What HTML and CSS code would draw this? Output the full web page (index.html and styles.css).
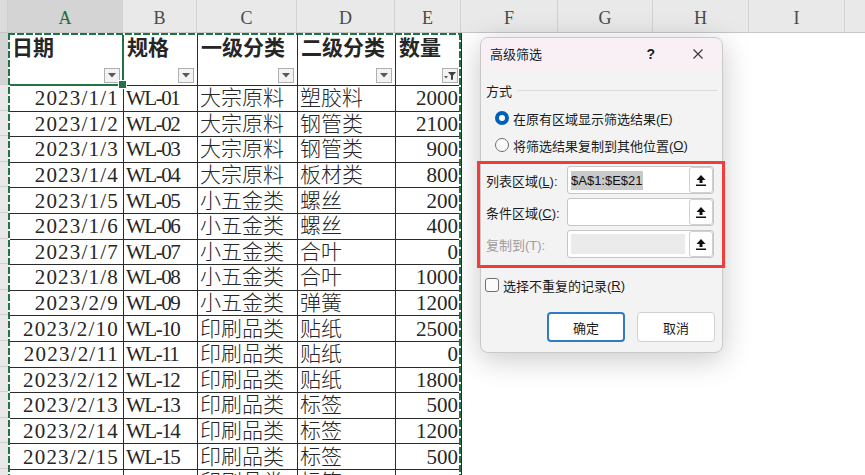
FILE: index.html
```html
<!DOCTYPE html>
<html lang="zh-CN">
<head>
    <meta charset="UTF-8">
    <title>高级筛选</title>
    <link rel="stylesheet" href="styles.css">
</head>
<body>

    <div class="col-heads">
        <div class="corner"></div>
        <div class="ch c-a sel">A</div>
        <div class="ch c-b">B</div>
        <div class="ch c-c">C</div>
        <div class="ch c-d">D</div>
        <div class="ch c-e">E</div>
        <div class="ch c-f">F</div>
        <div class="ch c-g">G</div>
        <div class="ch c-h">H</div>
        <div class="ch c-i">I</div>
        <div class="ch c-j"></div>
    </div>

    <div class="grid">
        <div class="row-heads">
            <div class="rh first"></div>
            <div class="rh"></div><div class="rh"></div><div class="rh"></div><div class="rh"></div>
            <div class="rh"></div><div class="rh"></div><div class="rh"></div><div class="rh"></div>
            <div class="rh"></div><div class="rh"></div><div class="rh"></div><div class="rh"></div>
            <div class="rh"></div><div class="rh"></div><div class="rh"></div><div class="rh"></div>
        </div>

        <div class="range">
            <table class="data">
                <colgroup>
                    <col class="c-a"><col class="c-b"><col class="c-c"><col class="c-d"><col class="c-e">
                </colgroup>
                <thead>
                    <tr class="head-row">
                        <th><div class="hd"><span>日期</span><span class="fbtn"><svg width="8" height="5" viewBox="0 0 8 5"><path d="M0 0h8L4 4.5z" fill="#595959"/></svg></span></div></th>
                        <th><div class="hd"><span>规格</span><span class="fbtn"><svg width="8" height="5" viewBox="0 0 8 5"><path d="M0 0h8L4 4.5z" fill="#595959"/></svg></span></div></th>
                        <th><div class="hd"><span>一级分类</span><span class="fbtn"><svg width="8" height="5" viewBox="0 0 8 5"><path d="M0 0h8L4 4.5z" fill="#595959"/></svg></span></div></th>
                        <th><div class="hd"><span>二级分类</span><span class="fbtn"><svg width="8" height="5" viewBox="0 0 8 5"><path d="M0 0h8L4 4.5z" fill="#595959"/></svg></span></div></th>
                        <th><div class="hd"><span>数量</span><span class="fbtn"><svg width="12" height="9" viewBox="0 0 12 9"><path d="M0 5h4L2 7.5z" fill="#595959"/><path d="M4 1h8L9 4.5V8.5L7 9V4.5z" fill="#404040"/></svg></span></div></th>
                    </tr>
                </thead>
                <tbody id="rows"></tbody>
            </table>
            <div class="cursor"><span class="handle"></span></div>
        </div>
    </div>

    <div class="dialog">
        <div class="dlg-title">
            <span class="dlg-name">高级筛选</span>
            <span class="dlg-help">?</span>
            <span class="dlg-close"><svg width="10" height="10" viewBox="0 0 10 10"><path d="M0.5 0.5L9.5 9.5M9.5 0.5L0.5 9.5" stroke="#333" stroke-width="1.1"/></svg></span>
        </div>
        <div class="dlg-body">
            <div class="group"><span>方式</span><i class="rule"></i></div>
            <div class="opt first"><span class="radio on"></span>在原有区域显示筛选结果(<u>F</u>)</div>
            <div class="opt"><span class="radio"></span>将筛选结果复制到其他位置(<u>O</u>)</div>

            <div class="fields">
                <div class="field">
                    <label>列表区域(<u>L</u>):</label>
                    <div class="box"><span class="val"><span class="hl">$A$1:$E$21</span></span><span class="pick"><svg width="12" height="13" viewBox="0 0 12 13"><path d="M6 1L10.5 6H7.5V9H4.5V6H1.5Z" fill="#111"/><rect x="1" y="10.5" width="10" height="1.5" fill="#111"/></svg></span></div>
                </div>
                <div class="field">
                    <label>条件区域(<u>C</u>):</label>
                    <div class="box"><span class="val"></span><span class="pick"><svg width="12" height="13" viewBox="0 0 12 13"><path d="M6 1L10.5 6H7.5V9H4.5V6H1.5Z" fill="#111"/><rect x="1" y="10.5" width="10" height="1.5" fill="#111"/></svg></span></div>
                </div>
                <div class="field off">
                    <label>复制到(T):</label>
                    <div class="box"><span class="val"></span><span class="pick"><svg width="12" height="13" viewBox="0 0 12 13"><path d="M6 1L10.5 6H7.5V9H4.5V6H1.5Z" fill="#111"/><rect x="1" y="10.5" width="10" height="1.5" fill="#111"/></svg></span></div>
                </div>
            </div>

            <div class="check"><span class="cb"></span>选择不重复的记录(<u>R</u>)</div>

            <div class="btns">
                <button class="btn primary">确定</button>
                <button class="btn">取消</button>
            </div>
        </div>
    </div>

    <div class="mark"></div>

    <script>
        let rows = [
            ['2023/1/1', 'WL-01', '大宗原料', '塑胶料', 2000],
            ['2023/1/2', 'WL-02', '大宗原料', '钢管类', 2100],
            ['2023/1/3', 'WL-03', '大宗原料', '钢管类', 900],
            ['2023/1/4', 'WL-04', '大宗原料', '板材类', 800],
            ['2023/1/5', 'WL-05', '小五金类', '螺丝', 200],
            ['2023/1/6', 'WL-06', '小五金类', '螺丝', 400],
            ['2023/1/7', 'WL-07', '小五金类', '合叶', 0],
            ['2023/1/8', 'WL-08', '小五金类', '合叶', 1000],
            ['2023/2/9', 'WL-09', '小五金类', '弹簧', 1200],
            ['2023/2/10', 'WL-10', '印刷品类', '贴纸', 2500],
            ['2023/2/11', 'WL-11', '印刷品类', '贴纸', 0],
            ['2023/2/12', 'WL-12', '印刷品类', '贴纸', 1800],
            ['2023/2/13', 'WL-13', '印刷品类', '标签', 500],
            ['2023/2/14', 'WL-14', '印刷品类', '标签', 1200],
            ['2023/2/15', 'WL-15', '印刷品类', '标签', 500],
            ['2023/2/16', 'WL-16', '印刷品类', '标签', 800]
        ];

        let body = document.getElementById('rows');
        rows.forEach(r => {
            body.innerHTML += `<tr><td class="num date">${r[0]}</td><td class="code">${r[1]}</td><td>${r[2]}</td><td>${r[3]}</td><td class="num">${r[4]}</td></tr>`;
        });
    </script>

</body>
</html>
```

FILE: styles.css
```css
body { margin: 0; width: 865px; height: 475px; overflow: hidden; position: relative; background: #fff; font-family: "Liberation Serif", "Noto Sans CJK SC", serif; }

/* column letters */
.col-heads { display: flex; height: 33px; background: #e9e9e9; border-bottom: 1px solid #c6c6c6; box-sizing: border-box; }
.corner { width: 8px; flex: none; background: #dcdcdc; border-right: 1px solid #cfcfcf; box-sizing: border-box; }
.ch { flex: none; display: flex; align-items: flex-end; justify-content: center; padding-bottom: 3px; box-sizing: border-box; border-right: 1px solid #d2d2d2; font-size: 18px; color: #4a4a4a; }
.ch.sel { background: #d4d4d4; color: #1f6a40; }
.c-a { width: 115px; }
.c-b { width: 74px; }
.c-c { width: 100px; }
.c-d { width: 98px; }
.c-e { width: 66px; }
.c-f { width: 97px; }
.c-g { width: 95px; }
.c-h { width: 96px; }
.c-i { width: 96px; }
.c-j { width: 20px; border-right: none; }

/* sheet body */
.grid { display: flex; }
.row-heads { width: 8px; flex: none; background: #e9e9e9; }
.rh { height: 25.6px; border-bottom: 1px solid #d0d0d0; box-sizing: border-box; }
.rh.first { height: 52px; background: #d4d4d4; }

.range { position: relative; width: 453px; flex: none; }
.range::after { content: ""; position: absolute; left: 0; top: 0; right: 0; bottom: 0; pointer-events: none;
    background:
        repeating-linear-gradient(90deg, #217346 0 7px, #fff 7px 9px) left top / 100% 2px no-repeat,
        repeating-linear-gradient(180deg, #217346 0 7px, #fff 7px 9px) left top / 2px 100% no-repeat,
        repeating-linear-gradient(180deg, #217346 0 7px, #fff 7px 9px) right top / 2px 100% no-repeat; }

.data { width: 453px; table-layout: fixed; border-collapse: collapse; font-size: 21px; color: #262626; }
.data td { border: 1px solid #2b2b2b; padding: 0 3px 0 2px; line-height: 24px; white-space: nowrap; overflow: hidden; font-weight: 300; }
.data tbody tr { height: 25.6px; }
.data .num { text-align: right; }
.data .date { letter-spacing: 1.2px; padding-right: 4px; }
.data .code { letter-spacing: -1.5px; }
.head-row { height: 52px; }
.data th { border: 1px solid #2b2b2b; padding: 0; vertical-align: top; text-align: left; font-weight: bold; }
.hd { height: 51px; display: flex; flex-direction: column; justify-content: space-between; padding: 0 3px 2px 3px; box-sizing: border-box; line-height: 28px; }
.fbtn { align-self: flex-end; width: 16px; height: 15px; border: 1px solid #b0b0b0; background: #f3f3f3; box-sizing: border-box; display: flex; align-items: center; justify-content: center; }

.cursor { position: absolute; left: 0; top: 0; width: 116px; height: 53px; border: 2px solid #217346; box-sizing: border-box; }
.handle { position: absolute; right: -5px; bottom: -5px; width: 7px; height: 7px; background: #217346; border: 1px solid #fff; }

/* dialog */
.dialog { position: absolute; left: 480px; top: 37px; width: 241px; border: 1px solid #c9c9c9; border-radius: 8px; background: #f3f3f3; box-shadow: 0 6px 30px rgba(0, 0, 0, 0.22); overflow: hidden; font-family: "Liberation Sans", "Noto Sans CJK SC", sans-serif; font-size: 13px; color: #1b1b1b; }
.dlg-title { display: flex; align-items: center; height: 31px; padding: 0 19px 0 9px; background: #f9f0f6; }
.dlg-help { margin-left: auto; font-weight: bold; font-size: 14px; }
.dlg-close { margin-left: 38px; display: flex; }
.dlg-body { padding: 12px 6px 10px 5px; }
.group { display: flex; align-items: center; height: 18px; gap: 6px; }
.rule { flex: 1; height: 1px; background: #d9d9d9; margin-right: -1px; }
.opt { display: flex; align-items: center; height: 24px; padding-left: 9px; margin-top: 3px; }
.opt.first { margin-top: 7px; }
.radio { width: 14px; height: 14px; border-radius: 50%; border: 1px solid #6f6f6f; background: #fbfbfb; box-sizing: border-box; margin-right: 4px; }
.radio.on { border: 4px solid #005fb8; background: #fff; }
.fields { margin-top: 9px; display: flex; flex-direction: column; gap: 4px; }
.field { display: flex; align-items: center; height: 28px; }
.field label { width: 81px; flex: none; }
.box { width: 147px; height: 28px; display: flex; align-items: center; border: 1px solid #c6c6c6; border-radius: 3px; background: #fff; box-sizing: border-box; padding-left: 3px; }
.val { flex: 1; }
.hl { background: #c9c9c9; color: #111; padding: 2px 0; }
.pick { width: 24px; height: 26px; flex: none; display: flex; align-items: center; justify-content: center; border: 1px solid #d0d0d0; border-radius: 3px; background: #fff; box-sizing: border-box; }
.field.off label { color: #9d9d9d; }
.field.off .val { height: 20px; background: #ebebeb; margin-right: 4px; }
.check { display: flex; align-items: center; height: 20px; margin-top: 17px; }
.cb { width: 14px; height: 14px; border: 1px solid #6f6f6f; border-radius: 3px; background: #fbfbfb; box-sizing: border-box; margin-right: 4px; margin-left: -1px; }
.btns { display: flex; justify-content: flex-end; gap: 12px; margin-top: 17px; padding-right: 1px; }
.btn { width: 78px; height: 30px; border: 1px solid #d0d0d0; border-radius: 4px; background: #fff; font-family: inherit; font-size: 13px; color: #1b1b1b; padding: 0; }
.btn.primary { border: 2px solid #2f7bc4; }

/* red annotation box */
.mark { position: absolute; left: 477px; top: 161px; width: 248px; height: 107px; border: 3px solid #f23b3b; box-sizing: border-box; }
```
